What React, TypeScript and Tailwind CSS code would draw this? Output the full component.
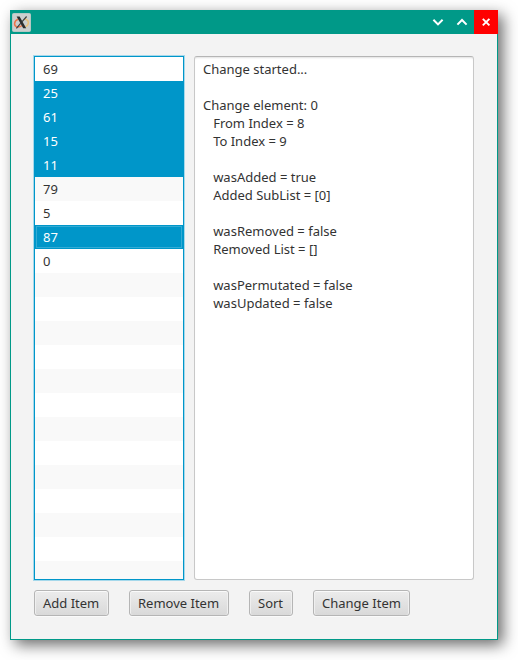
import React from 'react';

const rows = [
  { value: '69' },
  { value: '25', selected: true },
  { value: '61', selected: true },
  { value: '15', selected: true },
  { value: '11', selected: true },
  { value: '79' },
  { value: '5' },
  { value: '87', selected: true, focused: true },
  { value: '0' },
  ...Array.from({ length: 13 }, () => ({ value: '' })),
] as { value: string; selected?: boolean; focused?: boolean }[];

const log = `Change started...

Change element: 0
   From Index = 8
   To Index = 9

   wasAdded = true
   Added SubList = [0]

   wasRemoved = false
   Removed List = []

   wasPermutated = false
   wasUpdated = false`;

const buttons = [
  { label: 'Add Item', width: 'w-[75px]' },
  { label: 'Remove Item', width: 'w-[100px]' },
  { label: 'Sort', width: 'w-[44px]' },
  { label: 'Change Item', width: 'w-[97px]' },
];

function XLogo() {
  return (
    <svg width="19" height="19" viewBox="0 0 19 19" className="ml-[2px]">
      <rect x="0.5" y="0.5" width="18" height="18" rx="1" fill="#cbcfce" stroke="#b4c8c4" />
      <path d="M6.200 6.200C1.800 7.500 1.600 12.600 4.600 13.800c2 .6 4-.1 5.500-1.300" fill="none" stroke="#ee7448" strokeWidth="1.500" />
      <path d="M12.800 6c4.600 1 4.600 5.600.8 7.600" fill="none" stroke="#ecc078" strokeWidth="1.400" />
      <path d="M4.600 3.500h3l6.600 11.800h-3z" fill="#2b2e2f" />
      <path d="M14.600 3.500 9.900 8.800M8.800 10.200 4.400 15.300" stroke="#3d4142" strokeWidth="1.200" />
    </svg>
  );
}

function TitleBar() {
  return (
    <div className="flex h-6 items-center bg-[#009988]">
      <XLogo />
      <div className="ml-auto flex">
        <div className="flex h-6 w-6 items-center justify-center">
          <svg width="24" height="24" viewBox="0 0 24 24" fill="none" stroke="#fff" strokeWidth="2">
            <path d="m7.400 9.800 4.600 4.600 4.600-4.600" />
          </svg>
        </div>
        <div className="flex h-6 w-6 items-center justify-center">
          <svg width="24" height="24" viewBox="0 0 24 24" fill="none" stroke="#fff" strokeWidth="2">
            <path d="m7.400 14.600 4.600-4.600 4.600 4.600" />
          </svg>
        </div>
        <div className="flex h-6 w-6 items-center justify-center bg-[#ff0000]">
          <svg width="24" height="24" viewBox="0 0 24 24" fill="none" stroke="#fff" strokeWidth="1.900">
            <path d="m8.800 8.800 6.600 6.600M15.400 8.800l-6.600 6.600" />
          </svg>
        </div>
      </div>
    </div>
  );
}

export default function App() {
  return (
    <div className="h-[660px] w-[518px] overflow-hidden bg-white p-[10px] font-['Noto_Sans',sans-serif] text-[13px] text-[#333333]">
      <div className="flex h-[630px] w-[488px] flex-col bg-[#009988] shadow-[5px_5px_14px_rgba(0,0,0,0.58)]">
        <TitleBar />
        <div className="mx-px mb-px flex flex-1 flex-col bg-[#f3f3f3] px-[23px] pt-[22px]">
          <div className="flex gap-[10px]">
            <div className="h-[524px] w-[150px] overflow-hidden border border-[#0096c9] bg-white shadow-[0_0_0_1px_#a5d8eb]">
              {rows.map((row, i) => (
                <div
                  key={i}
                  className={`h-6 ${row.focused ? 'border border-[#0096c9] p-0' : 'p-px'} ${
                    row.selected ? 'bg-[#0096c9] text-white' : i % 2 ? 'bg-[#f9f9f9]' : 'bg-white'
                  }`}
                >
                  <div className={`flex h-[22px] items-center border px-[6px] pt-[2px] ${row.focused ? 'border-[#33abd4]' : 'border-transparent'}`}>
                    {row.value}
                  </div>
                </div>
              ))}
            </div>
            <div className="h-[524px] w-[280px] rounded-[3px] border border-[#c8c8c8] border-t-[#b5b5b5] bg-white px-2 pt-[3px] shadow-[inset_0_2px_2px_-1px_rgba(0,0,0,0.12)]">
              <pre className="font-['Noto_Sans',sans-serif] leading-[18px]">{log}</pre>
            </div>
          </div>
          <div className="mt-[10px] flex gap-5">
            {buttons.map((b) => (
              <button
                key={b.label}
                className={`h-[26px] rounded-[3px] border border-[#b5b5b5] bg-linear-to-b from-[#ececec] to-[#d9d9d9] pt-[2px] pl-2 text-left whitespace-nowrap shadow-[inset_0_1px_0_#fafafa,inset_1px_0_0_#efefef,inset_-1px_0_0_#efefef,0_1px_0_#fafafa] ${b.width}`}
              >
                {b.label}
              </button>
            ))}
          </div>
        </div>
      </div>
    </div>
  );
}
